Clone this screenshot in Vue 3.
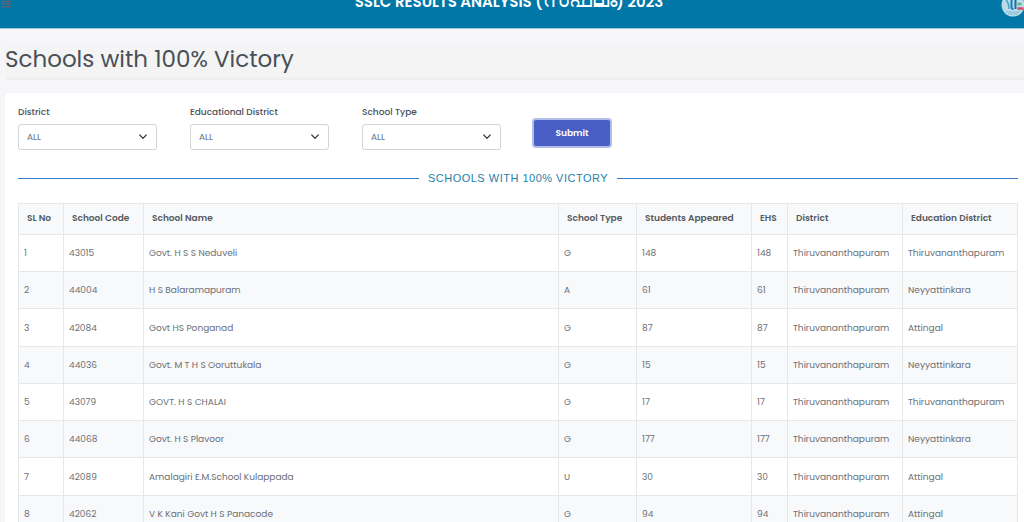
<script setup>
import { ref } from 'vue'

const filters = ref([
  { id: 'district', label: 'District', value: 'ALL' },
  { id: 'edu-district', label: 'Educational District', value: 'ALL' },
  { id: 'school-type', label: 'School Type', value: 'ALL' }
])

const columns = [
  { label: 'SL No', cls: 'c-sl' },
  { label: 'School Code', cls: 'c-code' },
  { label: 'School Name', cls: 'c-name' },
  { label: 'School Type', cls: 'c-type' },
  { label: 'Students Appeared', cls: 'c-appeared' },
  { label: 'EHS', cls: 'c-ehs' },
  { label: 'District', cls: 'c-district' },
  { label: 'Education District', cls: 'c-edu' }
]

const tvm = 'Thiruvananthapuram'
const rows = [
  [1, 43015, 'Govt. H S S Neduveli', 'G', 148, 148, tvm, tvm],
  [2, 44004, 'H S Balaramapuram', 'A', 61, 61, tvm, 'Neyyattinkara'],
  [3, 42084, 'Govt HS Ponganad', 'G', 87, 87, tvm, 'Attingal'],
  [4, 44036, 'Govt. M T H S Ooruttukala', 'G', 15, 15, tvm, 'Neyyattinkara'],
  [5, 43079, 'GOVT. H S CHALAI', 'G', 17, 17, tvm, tvm],
  [6, 44068, 'Govt. H S Plavoor', 'G', 177, 177, tvm, 'Neyyattinkara'],
  [7, 42089, 'Amalagiri E.M.School Kulappada', 'U', 30, 30, tvm, 'Attingal'],
  [8, 42062, 'V K Kani Govt H S Panacode', 'G', 94, 94, tvm, 'Attingal']
]
</script>

<template>
  <div class="page">
    <header class="topbar">
      <button class="menu" type="button" aria-label="Menu">
        <svg width="10" height="12" viewBox="0 0 10 12" aria-hidden="true">
          <path d="M0 5.5h10M0 8h10M0 10.7h10" stroke="#59647c" stroke-width="1.4" />
        </svg>
      </button>
      <div class="brand">SSLC RESULTS ANALYSIS (<span class="ml">സഫലം</span>) 2023</div>
      <svg class="logo" width="24" height="24" viewBox="0 0 24 24" aria-hidden="true">
        <circle cx="12" cy="12" r="11.5" fill="#b9dcea" />
        <path d="M5 7C7 9 8 12 8 16" stroke="#4ba3c9" stroke-width="1.6" fill="none" />
        <path d="M10.5 5v9q0 2 2 2" stroke="#1680b0" stroke-width="2" fill="none" />
        <path d="M14.5 5v11" stroke="#2468a0" stroke-width="2" />
        <path d="M16.5 11h4" stroke="#63b77a" stroke-width="2.5" />
        <path d="M16.5 15.5h6" stroke="#cf4867" stroke-width="2.5" />
        <path d="M5 19h14M7 21h10" stroke="#82bcd2" stroke-width="1" />
      </svg>
    </header>

    <main>
      <h1>Schools with 100% Victory</h1>

      <section class="card">
        <form class="filters" @submit.prevent>
          <div v-for="f in filters" :key="f.id" class="field">
            <label :for="f.id">{{ f.label }}</label>
            <div class="select">
              <select :id="f.id" v-model="f.value">
                <option>ALL</option>
              </select>
              <svg width="8" height="6" viewBox="0 0 8 6" aria-hidden="true">
                <path d="M0.8 1L4 4.3L7.2 1" fill="none" stroke="#343a40" stroke-width="1.2" stroke-linecap="round" stroke-linejoin="round" />
              </svg>
            </div>
          </div>
          <button class="submit" type="submit">Submit</button>
        </form>

        <h2>SCHOOLS WITH 100% VICTORY</h2>

        <table>
          <thead>
            <tr>
              <th v-for="c in columns" :key="c.label" :class="c.cls" scope="col">{{ c.label }}</th>
            </tr>
          </thead>
          <tbody>
            <tr v-for="r in rows" :key="r[0]">
              <td v-for="(v, i) in r" :key="i">{{ v }}</td>
            </tr>
          </tbody>
        </table>
      </section>
    </main>
  </div>
</template>

<style>
body {
  background: #f6f6fa;
  overflow: hidden;
}
</style>

<style scoped>
.page {
  font-family: Poppins, Inter, "Open Sans", sans-serif;
  color: #495057;
  background: #f6f6fa;
}
.page *,
.page {
  box-sizing: border-box;
}
.topbar {
  display: grid;
  grid-template-columns: 24px 1fr 24px;
  align-items: start;
  height: 29px;
  padding-left: 1px;
  overflow: hidden;
  background: #0077a6;
  border-bottom: 1px solid #9ccbe0;
}
.menu {
  display: flex;
  margin-top: -4px;
  padding: 0;
  border: 0;
  background: none;
}
.brand {
  height: 28px;
  margin-top: -12px;
  padding-right: 7px;
  color: #fff;
  font-size: 15px;
  line-height: 28px;
  font-weight: 600;
  text-align: center;
  white-space: nowrap;
}
.ml {
  font-size: 20px;
  line-height: 1;
  font-weight: 400;
}
.logo {
  margin-top: -7px;
  margin-left: 1px;
}
main {
  padding: 16px 0 0 5px;
}
h1 {
  height: 35px;
  margin: 0;
  font-size: 23px;
  line-height: 29px;
  font-weight: 400;
  background: #f4f4f4;
  border-bottom: 2px solid #eeeeef;
  border-radius: 3px;
}
.card {
  margin-top: 13px;
  padding: 13px 6px 0 13px;
  background: #fff;
  border-radius: 3px 0 0 0;
}
.filters {
  display: flex;
  gap: 33px;
}
.field {
  width: 139px;
}
label {
  display: block;
  height: 18px;
  font-size: 9px;
  line-height: 13px;
  font-weight: 500;
}
.select {
  display: grid;
  align-items: center;
}
.select select,
.select svg {
  grid-area: 1 / 1;
}
.select svg {
  justify-self: end;
  margin-right: 10px;
  pointer-events: none;
}
select {
  appearance: none;
  width: 100%;
  height: 26px;
  padding: 0 8px;
  color: #6b737b;
  font-family: inherit;
  font-size: 9px;
  background: #fff;
  border: 1px solid #ced4da;
  border-radius: 3px;
}
.submit {
  align-self: flex-end;
  width: 76px;
  height: 26px;
  margin: 0 0 4px;
  padding: 0;
  color: #fff;
  font-family: inherit;
  font-size: 9px;
  font-weight: 600;
  background: #485ec4;
  border: 0;
  border-radius: 2px;
  box-shadow: 0 0 0 2px #b3bdea;
}
h2 {
  display: flex;
  align-items: center;
  gap: 9px;
  margin: 20px 0 17px;
  color: #1f80aa;
  font-family: "Liberation Sans", Arial, sans-serif;
  font-size: 11px;
  line-height: 16px;
  font-weight: 400;
  letter-spacing: 0.5px;
}
h2::before,
h2::after {
  content: "";
  flex: 1;
  height: 1px;
  background: #3a7cc4;
}
table {
  width: 100%;
  table-layout: fixed;
  border-collapse: collapse;
  font-size: 9px;
  line-height: 14px;
}
th,
td {
  border: 1px solid #e6e7e9;
  text-align: left;
  white-space: nowrap;
}
th {
  height: 31px;
  padding: 0 8px 2px;
  color: #54595f;
  font-weight: 600;
  background: #f8f9fb;
}
td {
  height: 37px;
  padding: 0 5px;
  color: #6b6f75;
}
tbody tr:nth-child(4n + 3) td {
  height: 38px;
}
tbody tr:nth-child(even) {
  background: #f8f9fb;
}
.c-sl { width: 45px; }
.c-code { width: 80px; }
.c-type { width: 78px; }
.c-appeared { width: 115px; }
.c-ehs { width: 36px; }
.c-district { width: 115px; }
.c-edu { width: 115px; }
</style>
